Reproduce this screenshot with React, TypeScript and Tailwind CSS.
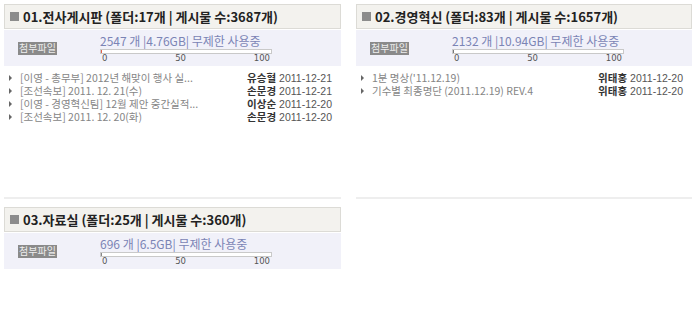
import React from 'react';

type Post = { title: string; author: string; date: string };
type Board = {
  title: string;
  count: string;
  size: string;
  tick: string;
  posts: Post[];
};

const BOARDS: Board[] = [
  {
    title: '01.전사게시판 (폴더:17개 | 게시물 수:3687개)',
    count: '2547',
    size: '4.76GB',
    tick: 'bg-[#e0604a]',
    posts: [
      { title: '[이영 - 총무부] 2012년 해맞이 행사 실...', author: '유승혈', date: '2011-12-21' },
      { title: '[조선속보] 2011. 12. 21(수)', author: '손문경', date: '2011-12-21' },
      { title: '[이영 - 경영혁신팀] 12월 제안 중간실적...', author: '이상순', date: '2011-12-20' },
      { title: '[조선속보] 2011. 12. 20(화)', author: '손문경', date: '2011-12-20' },
    ],
  },
  {
    title: '02.경영혁신 (폴더:83개 | 게시물 수:1657개)',
    count: '2132',
    size: '10.94GB',
    tick: 'bg-[#777777]',
    posts: [
      { title: "1분 명상('11.12.19)", author: '위태홍', date: '2011-12-20' },
      { title: '기수별 최종명단 (2011.12.19) REV.4', author: '위태홍', date: '2011-12-20' },
    ],
  },
  {
    title: '03.자료실 (폴더:25개 | 게시물 수:360개)',
    count: '696',
    size: '6.5GB',
    tick: 'bg-[#888888]',
    posts: [],
  },
];

const KR = "font-['Noto_Sans_CJK_KR','Noto_Sans',sans-serif]";

function BoardPanel({ board, last }: { board: Board; last?: boolean }) {
  return (
    <div className={`h-[195px] ${last ? '' : 'border-b-2 border-[#eeeeee]'}`}>
      {/* header */}
      <div className="h-[25px] flex items-center bg-[#f3f2ee] border border-[#dcdbd6] pl-[5px]">
        <span className="w-[9px] h-[9px] bg-[#8c8c8c] mr-[4px]" />
        <span className={`${KR} text-[13px] leading-none font-bold text-[#222]`}>{board.title}</span>
      </div>

      {/* usage */}
      <div className="mt-[1px] h-[36px] bg-[#f1f1f9] flex items-center">
        <span className={`${KR} ml-[14px] w-[39px] h-[13px] flex items-center justify-center bg-[#8a8a8a] text-[#eeeeee] text-[10px] leading-none`}>
          첨부파일
        </span>
        <div className="ml-[43px] w-[172px] flex flex-col">
          <span className={`${KR} text-[12px] leading-[13px] text-[#7b84b5] whitespace-nowrap`}>
            {board.count} 개 |{board.size}| 무제한 사용중
          </span>
          <div className="mt-[2px] h-[5px] border border-[#c9c9c9] bg-white flex">
            <div className={`w-[1px] ${board.tick}`} />
          </div>
          <div className="flex justify-between px-[2px] font-['DejaVu_Sans',sans-serif] text-[8.5px] leading-[9px] text-[#555]">
            <span>0</span>
            <span>50</span>
            <span>100</span>
          </div>
        </div>
      </div>

      {/* posts */}
      <ul className="mt-[5px]">
        {board.posts.map((p) => (
          <li key={p.title} className="h-[13px] flex items-center pl-[5px] pr-[9px] overflow-hidden">
            <span className="w-0 h-0 border-y-[3px] border-y-transparent border-l-[3px] border-l-[#666] mr-[8px]" />
            <span className={`${KR} flex-1 min-w-0 overflow-hidden text-[10.5px] leading-[13px] text-[#858585] whitespace-nowrap`}>{p.title}</span>
            <span className={`${KR} text-[10.5px] leading-[13px] font-bold text-[#333] mr-[3px]`}>{p.author}</span>
            <span className="font-['Liberation_Sans',sans-serif] text-[10.5px] leading-[13px] text-[#555] pt-[2px]">{p.date}</span>
          </li>
        ))}
      </ul>
    </div>
  );
}

const App: React.FC = () => {
  return (
    <div className="w-[697px] h-[322px] bg-white overflow-hidden pt-[4px] pl-[4px]">
      <div className="grid grid-cols-[337px_336px] gap-x-[15px] gap-y-[8px]">
        <BoardPanel board={BOARDS[0]} />
        <BoardPanel board={BOARDS[1]} />
        <BoardPanel board={BOARDS[2]} last />
      </div>
    </div>
  );
};

export default App;
